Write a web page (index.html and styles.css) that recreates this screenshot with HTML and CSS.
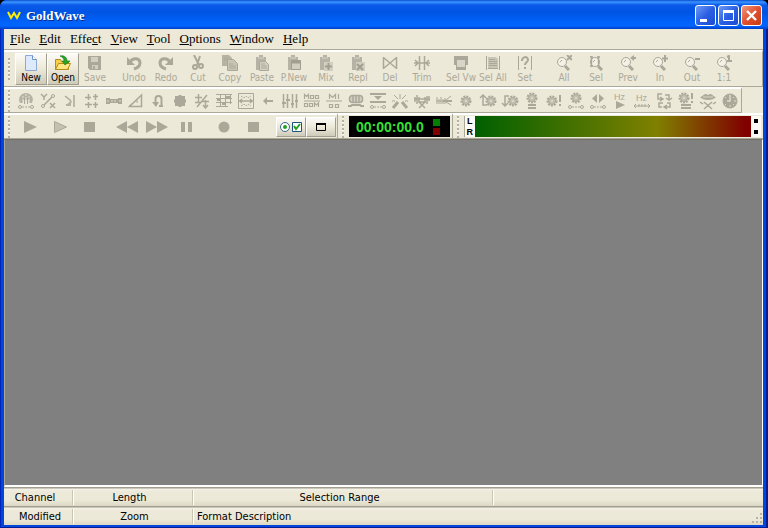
FILE: index.html
```html
<!DOCTYPE html>
<html lang="en">

<head>
    <meta charset="UTF-8" />
    <meta name="viewport" content="width=device-width, initial-scale=1.0" />
    <title>GoldWave</title>
    <link rel="stylesheet" href="styles.css">
</head>

<body>
    <!-- shared icon parts -->
    <svg class="defs" width="0" height="0" aria-hidden="true">
        <defs>
            <g id="gear">
                <circle cx="0" cy="0" r="4.5" fill="none" stroke="#aca899" stroke-width="2" stroke-dasharray="2 1" />
                <circle cx="0" cy="0" r="3.5" fill="#c4c1b2" stroke="#aca899" />
                <circle cx="0" cy="0" r="1" fill="#dedbcc" />
            </g>
            <g id="slider-line" fill="none" stroke="#aca899">
                <circle cx="3" cy="15" r="1.5" />
                <circle cx="15" cy="15" r="1.5" />
                <path d="M5 15h8" stroke-dasharray="2 1" />
            </g>
            <g id="lens" fill="none" stroke="#aca899">
                <circle cx="6" cy="6" r="4.5" fill="#f3f1e6" />
                <path d="M4 6l2-2" />
                <path d="M9 10l4 4" stroke-width="3" />
            </g>
            <g id="clip">
                <path d="M2 2h3V0h4v2h3v13H2z" fill="#b6b3a4" />
                <path d="M4 3h6" stroke="#d8d5c6" />
            </g>
        </defs>
    </svg>

    <div class="window">
        <header class="titlebar">
            <svg width="14" height="10" viewBox="0 0 14 10"><path d="M1 1l3 6 3-5 3 5 3-6" fill="none" stroke="#ffef00" stroke-width="2" /></svg>
            <h1>GoldWave</h1>
            <div class="controls">
                <button type="button" aria-label="Minimize"><svg width="19" height="19" viewBox="0 0 19 19"><path d="M4 13h7v3H4z" fill="#fff" /></svg></button>
                <button type="button" aria-label="Maximize"><svg width="19" height="19" viewBox="0 0 19 19"><path d="M4.5 5.5h10v9h-10z" fill="none" stroke="#fff" /><path d="M4 5.5h11" stroke="#fff" stroke-width="3" /></svg></button>
                <button type="button" class="close" aria-label="Close"><svg width="19" height="19" viewBox="0 0 19 19"><path d="M5 5l9 9M14 5l-9 9" stroke="#fff" stroke-width="2.4" /></svg></button>
            </div>
        </header>

        <nav class="menu">
            <a href="#"><u>F</u>ile</a>
            <a href="#"><u>E</u>dit</a>
            <a href="#">Effe<u>c</u>t</a>
            <a href="#"><u>V</u>iew</a>
            <a href="#"><u>T</u>ool</a>
            <a href="#"><u>O</u>ptions</a>
            <a href="#"><u>W</u>indow</a>
            <a href="#"><u>H</u>elp</a>
        </nav>

        <!-- main toolbar -->
        <div class="toolbar main">
            <span class="grip"></span>
            <div class="group">
                <button type="button" class="raised"><svg viewBox="0 0 16 16"><path d="M2.5.5h7l4 4v11h-11z" fill="#dceafc" stroke="#8ba9d6" /><path d="M9.5.5v4h4" fill="#fff" stroke="#6f93c8" /></svg>New</button>
                <button type="button" class="raised"><svg viewBox="0 0 16 16"><path d="M.5 14.5v-10h5l1 2h7v8z" fill="#f5cf4d" stroke="#b98a16" /><path d="M.5 14.5l3-6h12l-3 6z" fill="#ffe680" stroke="#b98a16" /><path d="M5 1c5-1 7 2 7 5h3l-5 4-3-4h2c0-2-1-4-4-5z" fill="#2aa52a" stroke="#167516" stroke-width=".6" /></svg>Open</button>
                <button type="button" disabled><svg viewBox="0 0 16 16"><path d="M1 1h13v14H3l-2-2z" fill="#aca899" /><path d="M4 2h7v5H4zM5 10h6v4H5z" fill="#d2cfc0" /><path d="M6 11h2v3H6z" fill="#aca899" /></svg>Save</button>
            </div>
            <div class="group">
                <button type="button" disabled><svg viewBox="0 0 16 16"><path d="M4 7c3-5 10-4 10 1 0 4-3 5-6 6" fill="none" stroke="#aca899" stroke-width="3" /><path d="M1 2v8h8z" fill="#aca899" /></svg>Undo</button>
                <button type="button" disabled><svg viewBox="0 0 16 16"><path d="M12 7C9 2 2 3 2 8c0 4 3 5 6 6" fill="none" stroke="#aca899" stroke-width="3" /><path d="M15 2v8H7z" fill="#aca899" /></svg>Redo</button>
                <button type="button" disabled><svg viewBox="0 0 16 16"><path d="M4 0l5 10M10 1L7 10" stroke="#aca899" stroke-width="2" /><circle cx="5" cy="12" r="2" fill="none" stroke="#aca899" stroke-width="2" /><circle cx="11" cy="11" r="2" fill="none" stroke="#aca899" stroke-width="2" /></svg>Cut</button>
                <button type="button" disabled><svg viewBox="0 0 16 16"><path d="M0 0h7l3 3v8H0z" fill="#b6b3a4" /><path d="M5.5 4.5h6l4 4v7h-10z" fill="#c8c5b6" stroke="#aca899" /><path d="M2 3h4M2 5h3M7 9h4M7 11h7M7 13h7" stroke="#aca899" /></svg>Copy</button>
                <button type="button" disabled><svg viewBox="0 0 16 16"><use href="#clip" /><path d="M5.5 6.5h6l3 3v6h-9z" fill="#d2cfc0" stroke="#aca899" /><path d="M7 9h4M7 11h6M7 13h6" stroke="#aca899" /></svg>Paste</button>
                <button type="button" disabled><svg viewBox="0 0 16 16"><use href="#clip" /><path d="M5.5 5.5h9v9h-9z" fill="#d2cfc0" stroke="#a19e8f" /><path d="M5 7h10" stroke="#a19e8f" stroke-width="3" /></svg>P.New</button>
                <button type="button" disabled><svg viewBox="0 0 16 16"><use href="#clip" /><path d="M6 7h9v9H6z" fill="#d2cfc0" /><path d="M10.5 8v7M7 11.5h7" stroke="#a19e8f" stroke-width="2" /></svg>Mix</button>
                <button type="button" disabled><svg viewBox="0 0 16 16"><use href="#clip" /><path d="M6 7h9v9H6z" fill="#d2cfc0" /><path d="M7 9l6 6M13 9l-6 6" stroke="#a19e8f" stroke-width="2" /></svg>Repl</button>
                <button type="button" disabled><svg viewBox="0 0 16 16"><path d="M1.5 2v12M14.5 2v12M2 3l12 10M14 3L2 13" fill="none" stroke="#aca899" stroke-width="1.5" /></svg>Del</button>
                <button type="button" disabled><svg viewBox="0 0 16 16"><path d="M5.5 1v14M10.5 1v14M0 8h16M1 5l3 3-3 3M15 5l-3 3 3 3" fill="none" stroke="#aca899" stroke-width="1.5" /></svg>Trim</button>
            </div>
            <div class="group">
                <button type="button" disabled><svg viewBox="0 0 16 16"><path d="M1 1h14v9h-2v5H3v-5H1z" fill="#aca899" /><path d="M4 5h8v7H4z" fill="#d8d5c6" /></svg>Sel Vw</button>
                <button type="button" disabled><svg viewBox="0 0 16 16"><path d="M1.5 1v14M14.5 1v14" stroke="#aca899" /><path d="M3 2h8l2 2v9H3z" fill="#c8c5b6" /><path d="M4 4.5h6M4 6.5h8M4 8.5h8M4 10.5h8M3 13.5h10" stroke="#aca899" /></svg>Sel All</button>
                <button type="button" disabled><svg viewBox="0 0 16 16"><path d="M1.5 1v14M14.5 1v14" stroke="#aca899" /><path d="M5 6c0-5 6-5 6-1 0 2-3 2-3 5M8 12v2" fill="none" stroke="#aca899" stroke-width="2" /></svg>Set</button>
            </div>
            <div class="group">
                <button type="button" disabled><svg viewBox="0 0 16 16"><use href="#lens" y="1" /><path d="M11 0l5 5M16 0l-5 5" stroke="#aca899" stroke-width="2" /></svg>All</button>
                <button type="button" disabled><svg viewBox="0 0 16 16"><use href="#lens" x="1" y="1" /><path d="M3.5 1v11M10.5 1v11M2 2h3M9 2h3M2 11h3" stroke="#aca899" stroke-width="1.5" /></svg>Sel</button>
                <button type="button" disabled><svg viewBox="0 0 16 16"><use href="#lens" y="1" /><path d="M10 3l4-3v2h2v2h-2v2z" fill="#aca899" /></svg>Prev</button>
                <button type="button" disabled><svg viewBox="0 0 16 16"><use href="#lens" y="1" /><path d="M13 0v7M10 3.5h6" stroke="#aca899" stroke-width="2" /></svg>In</button>
                <button type="button" disabled><svg viewBox="0 0 16 16"><use href="#lens" y="1" /><path d="M11 4h5" stroke="#aca899" stroke-width="2" /></svg>Out</button>
                <button type="button" disabled><svg viewBox="0 0 16 16"><use href="#lens" y="1" /><path d="M11 2l2-1v5M11 6h5" fill="none" stroke="#aca899" stroke-width="2" /></svg>1:1</button>
            </div>
        </div>

        <!-- effects toolbar -->
        <div class="deck">
            <div class="toolbar effects">
                <span class="grip"></span>
                <div class="group">
                    <button type="button" disabled aria-label="Doppler"><svg viewBox="0 0 18 18"><path d="M3 11C0 5 5 1 9 1s9 4 6 10l-3 0V8H6v3z" fill="#b6b3a4" /><path d="M5 5h2M8 3h2M11 5h2M6 11V7M9 11V5M12 11V7" stroke="#e4e1d2" /><path d="M7.5 6v6M10.5 6v6" stroke="#aca899" /><use href="#slider-line" /></svg></button>
                    <button type="button" disabled aria-label="Dynamics"><svg viewBox="0 0 18 18"><path d="M2 2l3 3 3-3M5 5v3M11 11l5 5M16 11l-5 5M3 15L14 4" fill="none" stroke="#aca899" stroke-width="1.5" /><circle cx="14" cy="4" r="1.5" fill="#ece9d8" stroke="#aca899" /><circle cx="4" cy="14" r="1.5" fill="#ece9d8" stroke="#aca899" /></svg></button>
                    <button type="button" disabled aria-label="Echo"><svg viewBox="0 0 18 18"><path d="M4 4l5 4c2 2 1 4-4 5M13 3v12" fill="none" stroke="#aca899" stroke-width="1.5" /><path d="M10 8l-5 6h5z" fill="#b6b3a4" /></svg></button>
                    <button type="button" disabled aria-label="Compressor"><svg viewBox="0 0 18 18"><path d="M5.5 2v6M2 5.5h6M12.5 2v6M10 4.5h5M5.5 10v6M2 12.5h7M12.5 10v6M10 12.5h5" fill="none" stroke="#aca899" stroke-width="1.5" /></svg></button>
                    <button type="button" disabled aria-label="Flanger"><svg viewBox="0 0 18 18"><path d="M1 6h4v1h8V6h4v6h-4v-1H5v1H1z" fill="#aca899" /><path d="M2 9h2M14 9h2M6 9h6" stroke="#c4c1b2" stroke-width="2" stroke-dasharray="2 1" /></svg></button>
                    <button type="button" disabled aria-label="Interpolate"><svg viewBox="0 0 18 18"><path d="M2.5 14.5L14.5 3v11.5z" fill="none" stroke="#aca899" stroke-width="1.5" /><path d="M2 14l8-6M10 8v3" stroke="#aca899" /></svg></button>
                    <button type="button" disabled aria-label="Invert"><svg viewBox="0 0 18 18"><path d="M10 14h4M12.5 13V7c0-4-6-4-6 0v4" fill="none" stroke="#aca899" stroke-width="2" /><path d="M3 10h7l-3 5z" fill="#aca899" /></svg></button>
                    <button type="button" disabled aria-label="Mechanize"><svg viewBox="0 0 18 18"><path d="M8 3h2l1 1h3v3l1 1v2l-1 1v3h-3l-1 1H8l-1-1H4v-3l-1-1V8l1-1V4h3z" fill="#aca899" /></svg></button>
                    <button type="button" disabled aria-label="Offset"><svg viewBox="0 0 18 18"><path d="M5.5 2v8M2 5.5h7M2 10.5h6M4 15L14 3M12.5 8v8M9 9.5h7M10 13l2.5 3 2.5-3" fill="none" stroke="#aca899" stroke-width="1.5" /></svg></button>
                    <button type="button" disabled aria-label="Equalizer curve"><svg viewBox="0 0 18 18"><path d="M1 2.5h16M1 6.5h16M1 10.5h16M1 14.5h12M5.5 2v13M10.5 2v13M15.5 2v10" stroke="#aca899" /><path d="M2 8h3M7 12h3M11 5h4" stroke="#aca899" stroke-width="2" /></svg></button>
                    <button type="button" disabled aria-label="Pan"><svg viewBox="0 0 18 18"><path d="M1.5 1.5h15v15h-15z" fill="none" stroke="#aca899" /><path d="M2 9h14M5 7L3 9l2 2M13 7l2 2-2 2" fill="none" stroke="#aca899" stroke-width="1.5" /><path d="M4 4l3 2 2-2 2 2 3-2M4 14l3-2 2 2 2-2 3 2" fill="none" stroke="#aca899" stroke-dasharray="2 1" /></svg></button>
                    <button type="button" disabled aria-label="Reverse"><svg viewBox="0 0 18 18"><path d="M5 9h9" stroke="#aca899" stroke-width="2" /><path d="M4 9l4-4v8z" fill="#aca899" /></svg></button>
                    <button type="button" disabled aria-label="Equalizer"><svg viewBox="0 0 18 18"><path d="M2.5 2v14M6.5 2v14M11.5 2v14M15.5 2v14" stroke="#aca899" stroke-width="1.5" /><path d="M1 11h4M5 8h4M10 12h3M14 9h3" stroke="#aca899" stroke-width="2" /></svg></button>
                    <button type="button" disabled aria-label="Low pass"><svg viewBox="0 0 18 18"><path d="M1 9h16M1.5 7V2.5l2 2 2-2V7M7.5 3.5h3v3h-3zM12.5 3.5h3v3h-3zM1.5 11.5h3v3h-3zM6.5 11.5h3v3h-3zM11.5 15v-4l2 2 2-2v4" fill="none" stroke="#aca899" stroke-width="1.2" /></svg></button>
                    <button type="button" disabled aria-label="Band pass"><svg viewBox="0 0 18 18"><path d="M1 9h16M4.5 7V2.5l3 3 3-3V7M13.5 2v5M4.5 12.5h3v3h-3zM10.5 12.5h3v3h-3z" fill="none" stroke="#aca899" stroke-width="1.2" /></svg></button>
                    <button type="button" disabled aria-label="Noise gate"><svg viewBox="0 0 18 18"><rect x="2.5" y="3.5" width="13" height="7" rx="3" fill="#d2cfc0" stroke="#aca899" stroke-width="1.5" /><path d="M6 4v6M9 4v6M12 4v6" stroke="#aca899" stroke-width="1.5" /><path d="M1 14h3l1-1h8l1 1h3" fill="none" stroke="#aca899" stroke-width="2" /></svg></button>
                    <button type="button" disabled aria-label="Smoother"><svg viewBox="0 0 18 18"><path d="M1 2h16M1 10h16" stroke="#aca899" stroke-width="2" /><path d="M5 4h8L9 8z" fill="#aca899" /><use href="#slider-line" /></svg></button>
                    <button type="button" disabled aria-label="Pop and click"><svg viewBox="0 0 18 18"><path d="M2 16l5-6M16 16l-5-6" stroke="#aca899" stroke-width="3" /><path d="M9 2v5M3 3l4 4M15 3l-4 4M1 9h3M14 9h3" stroke="#aca899" /></svg></button>
                    <button type="button" disabled aria-label="Silence reduction"><svg viewBox="0 0 18 18"><path d="M1 7h16M2 5v5M4 3v9M6 5v5M12 5v5M14 4v8M16 4v5" stroke="#aca899" stroke-width="1.5" /><path d="M6 10l6 6M12 10l-6 6M5 10h8" stroke="#aca899" stroke-width="1.5" /></svg></button>
                    <button type="button" disabled aria-label="Noise reduction"><svg viewBox="0 0 18 18"><path d="M1 9h16M2 5v7M4 7v5M6 5v7M8 7v5M10 6v6M11 8l5-4M11 10l5 3" stroke="#aca899" /><path d="M8 9h9" stroke="#aca899" stroke-width="2" /></svg></button>
                    <button type="button" disabled aria-label="Plugin"><svg viewBox="0 0 18 18"><use href="#gear" x="9" y="9" /></svg></button>
                    <button type="button" disabled aria-label="Pitch"><svg viewBox="0 0 18 18"><path d="M1 6l3-3 3 3M4 3v10h4" fill="none" stroke="#aca899" stroke-width="1.5" /><use href="#gear" x="12" y="9" /></svg></button>
                    <button type="button" disabled aria-label="Reverb"><svg viewBox="0 0 18 18"><path d="M8 4H4v10M1 11l3 3 3-3" fill="none" stroke="#aca899" stroke-width="1.5" /><use href="#gear" x="12" y="9" /></svg></button>
                    <button type="button" disabled aria-label="Match volume"><svg viewBox="0 0 18 18"><use href="#gear" x="9" y="6" /><path d="M5 13h8M5 16h8" stroke="#aca899" stroke-width="2" /></svg></button>
                    <button type="button" disabled aria-label="Maximize volume"><svg viewBox="0 0 18 18"><use href="#gear" x="7" y="9" /><path d="M15 3v7M15 12v2" stroke="#aca899" stroke-width="2" /></svg></button>
                    <button type="button" disabled aria-label="Change volume"><svg viewBox="0 0 18 18"><use href="#gear" x="9" y="6" /><use href="#slider-line" /></svg></button>
                    <button type="button" disabled aria-label="Shape volume"><svg viewBox="0 0 18 18"><path d="M8 2v9L3 6.5zM10 2v9l5-4.5z" fill="#aca899" /><use href="#slider-line" /></svg></button>
                    <button type="button" disabled aria-label="Playback rate"><svg viewBox="0 0 18 18"><text x="3" y="8">Hz</text><path d="M5 9l9 4-9 4z" fill="#aca899" /></svg></button>
                    <button type="button" disabled aria-label="Resample"><svg viewBox="0 0 18 18"><text x="3" y="9">Hz</text><path d="M1 14h16M3 12l-2 2 2 2M15 12l2 2-2 2M6 12v3M9 12v3M12 12v3" fill="none" stroke="#aca899" /></svg></button>
                    <button type="button" disabled aria-label="Time warp"><svg viewBox="0 0 18 18"><path d="M7 2H3v5h4M5 5l3 2-3 2M10 3h4v4M11 6l3 2 3-2M8 11H4v4h3M12 11h3v4h-5M12 13l-3 2 3 2" fill="none" stroke="#aca899" stroke-width="1.5" /></svg></button>
                    <button type="button" disabled aria-label="Voice over"><svg viewBox="0 0 18 18"><use href="#gear" x="7" y="6" /><path d="M15 1v6M15 9v2M4 13h10M4 16h10" stroke="#aca899" stroke-width="2" /></svg></button>
                    <button type="button" disabled aria-label="Reduce vocals"><svg viewBox="0 0 18 18"><path d="M1 5c3 0 3-3 6-3l2 1 2-1c3 0 3 3 6 3-3 4-13 4-16 0z" fill="#aca899" /><path d="M4 5h10" stroke="#d8d5c6" /><path d="M5 10l8 7M13 10l-8 7M1 10l3 2M17 10l-3 2" stroke="#aca899" stroke-width="1.5" /></svg></button>
                    <button type="button" disabled aria-label="Speed"><svg viewBox="0 0 18 18"><circle cx="9" cy="9" r="7" fill="#aca899" stroke="#aca899" /><path d="M9 3v6H6" fill="none" stroke="#dedbcc" stroke-width="1.5" /><path d="M4 5l1 1M13 5l-1 1M4 13l1-1M13 13l-1-1M9 13v2M13 9h2" stroke="#dedbcc" /></svg></button>
                </div>
            </div>
        </div>

        <!-- transport, time display and level meter -->
        <div class="deck">
            <div class="toolbar transport">
                <span class="grip"></span>
                <div class="group">
                    <button type="button" disabled aria-label="Play"><svg viewBox="0 0 24 16"><path d="M6 2l13 6-13 6z" fill="#aca899" /></svg></button>
                    <button type="button" disabled aria-label="Play selection"><svg viewBox="0 0 24 16"><path d="M6.5 2.5l12 5.5-12 5.5z" fill="#c4c1b2" stroke="#aca899" /></svg></button>
                    <button type="button" disabled aria-label="Stop"><svg viewBox="0 0 24 16"><path d="M6 3h11v10H6z" fill="#aca899" /></svg></button>
                </div>
                <div class="group">
                    <button type="button" disabled aria-label="Rewind"><svg viewBox="0 0 24 16"><path d="M12 2v12L1 8zM23 2v12L12 8z" fill="#aca899" /></svg></button>
                    <button type="button" disabled aria-label="Fast forward"><svg viewBox="0 0 24 16"><path d="M1 2v12l11-6zM12 2v12l11-6z" fill="#aca899" /></svg></button>
                    <button type="button" disabled aria-label="Pause"><svg viewBox="0 0 24 16"><path d="M6 3h4v10H6zM13 3h4v10h-4z" fill="#aca899" /></svg></button>
                </div>
                <div class="group">
                    <button type="button" disabled aria-label="Record"><svg viewBox="0 0 24 16"><circle cx="12" cy="8" r="5.5" fill="#aca899" /></svg></button>
                    <button type="button" disabled aria-label="Stop recording"><svg viewBox="0 0 24 16"><path d="M6 3h11v10H6z" fill="#aca899" /></svg></button>
                </div>
                <div class="group">
                    <button type="button" class="raised" aria-label="Control properties"><svg viewBox="0 0 24 16"><circle cx="6" cy="8" r="4.5" fill="#fff" stroke="#39658f" /><circle cx="6" cy="8" r="2" fill="#21a121" /><path d="M13.5 3.5h9v9h-9z" fill="#fff" stroke="#1c5180" /><path d="M15 7l2 3 4-5" fill="none" stroke="#21a121" stroke-width="2" /></svg></button>
                    <button type="button" class="raised" aria-label="Control window"><svg viewBox="0 0 24 16"><path d="M7.5 4.5h9v7h-9z" fill="none" stroke="#000" /><path d="M7 5h10" stroke="#000" stroke-width="2" /></svg></button>
                </div>
            </div>
            <div class="toolbar time">
                <span class="grip"></span>
                <div class="lcd">
                    <output>00:00:00.0</output>
                    <span class="lamps"><i class="green"></i><i class="red"></i></span>
                </div>
            </div>
            <div class="toolbar levels">
                <span class="grip"></span>
                <div class="channels"><span>L</span><span>R</span></div>
                <div class="meter"></div>
                <div class="peaks"><i></i><i></i></div>
            </div>
        </div>

        <main class="workspace"></main>

        <footer>
            <div class="status first">
                <span>Channel</span>
                <span>Length</span>
                <span>Selection Range</span>
            </div>
            <div class="status second">
                <span>Modified</span>
                <span>Zoom</span>
                <span>Format Description</span>
                <svg width="12" height="12" viewBox="0 0 12 12"><path d="M9 1h2v2H9zM5 5h2v2H5zM9 5h2v2H9zM1 9h2v2H1zM5 9h2v2H5zM9 9h2v2H9z" fill="#b8b4a3" /></svg>
            </div>
        </footer>
    </div>
</body>

</html>
```

FILE: styles.css
```css
:root {
    --face: #ece9d8;
    --shadow: #aca899;
    --blue: #0046dd;
}

* {
    box-sizing: border-box;
}

body {
    margin: 0;
    background: #000;
    color: #000;
    font-family: "DejaVu Sans Condensed", "DejaVu Sans", sans-serif;
    font-size: 10px;
}

.defs {
    position: absolute;
}

.window {
    display: flex;
    flex-direction: column;
    min-height: 100vh;
    padding: 0 5px 3px 4px;
    background: var(--blue);
    border-radius: 7px 7px 0 0;
    box-shadow: inset 1px 0 #0024b8, inset -2px -1px #001d96;
    overflow: hidden;
}

/* title bar */
.titlebar {
    display: flex;
    align-items: center;
    height: 29px;
    margin: 0 -5px 0 -4px;
    padding: 2px 6px 0 7px;
    background: linear-gradient(#0a4fd0 0, #3c94ff 2px, #0a5ae8 5px, #0054e3 12px, #0062fa 22px, #0064ff 26px, #003dc4 29px);
}

.titlebar h1 {
    flex: 1;
    margin: 0 0 0 5px;
    color: #fff;
    font-family: "Liberation Serif", serif;
    font-size: 13px;
    font-weight: bold;
    text-shadow: 1px 1px #0a2a85;
}

.controls {
    display: flex;
    gap: 2px;
}

.controls button {
    width: 21px;
    height: 21px;
    padding: 0;
    border: 1px solid #fff;
    border-radius: 3px;
    background: linear-gradient(135deg, #6f9bf5, #2c60e4 50%, #1a4bd0);
}

.controls .close {
    background: linear-gradient(135deg, #f09a80, #e05030 50%, #c83a12);
}

.controls svg {
    display: block;
}

/* menu */
.menu {
    display: flex;
    align-items: center;
    gap: 9px;
    height: 21px;
    padding: 0 6px;
    background: var(--face);
    border-bottom: 1px solid var(--shadow);
}

.menu a {
    color: #000;
    font-family: "Liberation Serif", serif;
    font-size: 13px;
    text-decoration: none;
}

/* toolbars */
.toolbar {
    display: flex;
    align-items: center;
    background: var(--face);
    border-top: 2px solid #fff;
    border-bottom: 1px solid var(--shadow);
}

.grip {
    flex: none;
    width: 2px;
    height: 22px;
    margin: 0 5px 0 4px;
    background: repeating-linear-gradient(#b5b1a1 0 2px, #f8f7f0 2px 3px, transparent 3px 4px);
}

.group {
    display: flex;
}

.toolbar button {
    display: flex;
    flex-direction: column;
    align-items: center;
    justify-content: center;
    padding: 0;
    border: 1px solid transparent;
    background: none;
    font: inherit;
    white-space: nowrap;
}

.toolbar button:disabled {
    color: var(--shadow);
}

.toolbar .raised {
    background: linear-gradient(#fbfaf6, #ece9d8 50%, #cfcbba);
    border-color: #fff #a19e8f #a19e8f #fff;
}

.main {
    height: 37px;
    border-right: 1px solid var(--shadow);
}

.main .group,
.transport .group {
    margin-right: 7px;
}

.main button {
    width: 32px;
    height: 32px;
    gap: 1px;
    line-height: 12px;
}

.main svg {
    width: 16px;
    height: 16px;
}

.effects {
    border-right: 1px solid var(--shadow);
}

.effects button {
    width: 22px;
    height: 22px;
}

.effects svg {
    width: 18px;
    height: 18px;
}

.effects text {
    fill: var(--shadow);
    font-family: "Liberation Sans", sans-serif;
    font-size: 9px;
}

.deck {
    display: flex;
    background: var(--face);
}

.deck .toolbar {
    height: 26px;
}

.transport,
.time {
    border-right: 1px solid var(--shadow);
}

.transport .group:last-child {
    margin-right: 1px;
}

.transport button {
    width: 30px;
    height: 20px;
}

.transport svg {
    width: 24px;
    height: 16px;
}

.lcd {
    display: flex;
    align-items: center;
    gap: 9px;
    height: 21px;
    margin-right: 2px;
    padding: 0 10px 0 7px;
    background: #000;
}

.lcd output {
    color: #35e035;
    font-family: "Liberation Sans", sans-serif;
    font-size: 14px;
    font-weight: bold;
}

.lamps {
    display: grid;
    gap: 2px;
}

.lamps i {
    width: 7px;
    height: 7px;
}

.green {
    background: #008000;
}

.red {
    background: #800000;
}

.levels {
    flex: 1;
    padding-right: 2px;
}

.channels {
    display: flex;
    flex-direction: column;
    align-items: center;
    justify-content: space-around;
    width: 11px;
    height: 21px;
    background: #fbfaf4;
    border-left: 1px solid var(--shadow);
    font-family: "Liberation Sans", sans-serif;
    font-size: 9px;
    font-weight: bold;
    line-height: 10px;
}

.meter {
    flex: 1;
    height: 21px;
    background: linear-gradient(90deg, #006000, #808000 66%, #800000 98%);
}

.peaks {
    display: grid;
    align-content: space-around;
    justify-content: center;
    width: 10px;
    height: 21px;
    background: #fbfaf4;
}

.peaks i {
    width: 4px;
    height: 4px;
    background: #000;
}

/* empty document area */
.workspace {
    flex: 1;
    background: #808080;
    border: 1px solid #fff;
    border-bottom-width: 2px;
    border-top-color: #716f64;
    border-left-color: #aca899;
}

/* status bars */
.status {
    display: grid;
    align-items: end;
    height: 19px;
    padding-bottom: 1px;
    background: linear-gradient(#a19e8f 1px, #f3f1e6 2px, #ece9d8 5px, #ece9d8 13px, #dcd8c5);
    font-size: 11px;
    line-height: 15px;
    text-align: center;
}

.status span {
    height: 15px;
    padding-right: 6px;
    border-right: 1px solid #c9c5b2;
    box-shadow: 1px 0 #fff;
}

.first {
    grid-template-columns: 69px 120px 300px 1fr;
}

.second {
    grid-template-columns: 69px 120px 1fr auto;
}

.second span {
    padding: 0 0 0 4px;
}

.second span:nth-child(3) {
    border: 0;
    box-shadow: none;
    text-align: left;
}
```
